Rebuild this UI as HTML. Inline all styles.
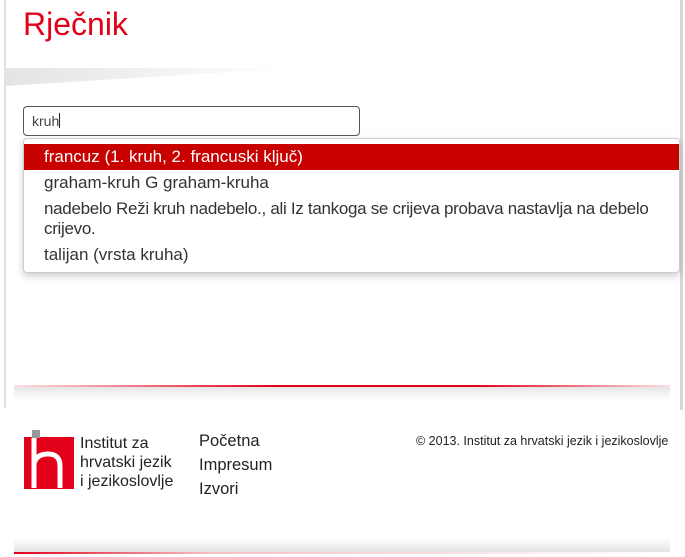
<!DOCTYPE html>
<html><head><meta charset="utf-8"><style>
*{margin:0;padding:0;box-sizing:border-box}
html,body{width:685px;height:557px;overflow:hidden;background:#fff;font-family:"Liberation Sans",sans-serif;position:relative}
.vl{position:absolute;left:4px;top:0;width:2px;height:408px;background:#e2e2e2}
.vr{position:absolute;left:680px;top:0;width:3px;height:410px;background:#d6d6d6}
h1{position:absolute;left:23px;top:6px;font-weight:normal;font-size:32px;color:#e2001a}
.hs{position:absolute;left:6px;top:68px;width:290px;height:18px;background:linear-gradient(to right,#e4e4e4,#f4f4f4 60%,#fff);clip-path:polygon(0 0,100% 0,0 100%)}
.inp{position:absolute;left:23px;top:106px;width:337px;height:30px;border:1px solid #555;border-radius:4px;font-size:14px;color:#444;padding:6px 8px}
.cur{display:inline-block;width:1px;height:15px;background:#222;vertical-align:-2px}
.dd{position:absolute;left:23px;top:138px;width:657px;height:135px;border:1px solid #ccc;border-radius:4px;background:#fff;box-shadow:0 3px 8px rgba(0,0,0,.2);padding-top:5px}
.it{padding:3px 20px;font-size:17px;line-height:20px;color:#333;white-space:nowrap}
.it.a{background:#c80000;color:#fff}
.fl{position:absolute;left:14px;top:385px;width:656px;height:2px;background:linear-gradient(to right,#fbe0e3,#e2001a 40%,#e2001a 70%,#fbe0e3)}
.fs{position:absolute;left:14px;top:387px;width:656px;height:14px;background:linear-gradient(to bottom,#e6e6e6,#fff)}
.bs{position:absolute;left:14px;top:538px;width:656px;height:15px;background:linear-gradient(to top,#e0e0e0,#fff)}
.bl{position:absolute;left:14px;top:552px;width:656px;height:2px;background:linear-gradient(to right,#e2001a,#f7c0c6 30%,#fff)}
.ft{position:absolute;font-size:16px;color:#222;line-height:19px}
.nav{position:absolute;left:199px;top:429px;font-size:16.5px;line-height:24px;color:#222}
.cp{position:absolute;left:416px;top:434px;font-size:12.5px;color:#222}
</style></head><body>
<div class="vl"></div><div class="vr"></div>
<h1>Rječnik</h1>
<div class="hs"></div>
<div class="inp">kruh<span class="cur"></span></div>
<div class="dd">
<div class="it a">francuz (1. kruh, 2. francuski ključ)</div>
<div class="it">graham-kruh G graham-kruha</div>
<div class="it" style="letter-spacing:-0.3px">nadebelo Reži kruh nadebelo., ali Iz tankoga se crijeva probava nastavlja na debelo<br>crijevo.</div>
<div class="it">talijan (vrsta kruha)</div>
</div>
<div class="fl"></div><div class="fs"></div>
<svg style="position:absolute;left:24px;top:430px" width="50" height="59" viewBox="0 0 50 59">
<rect x="0" y="7" width="50" height="52" fill="#e2001a"/>
<rect x="8" y="0" width="8" height="8" fill="#999"/>
<path d="M10 8 V58 M10 34 Q12 24 24 24 Q36 24 36 36 V58" stroke="#fff" stroke-width="5" fill="none"/>
</svg>
<div class="ft" style="left:80px;top:434px">Institut za<br>hrvatski jezik<br>i jezikoslovlje</div>
<div class="nav">Početna<br>Impresum<br>Izvori</div>
<div class="cp">© 2013. Institut za hrvatski jezik i jezikoslovlje</div>
<div class="bs"></div><div class="bl"></div>
</body></html>
